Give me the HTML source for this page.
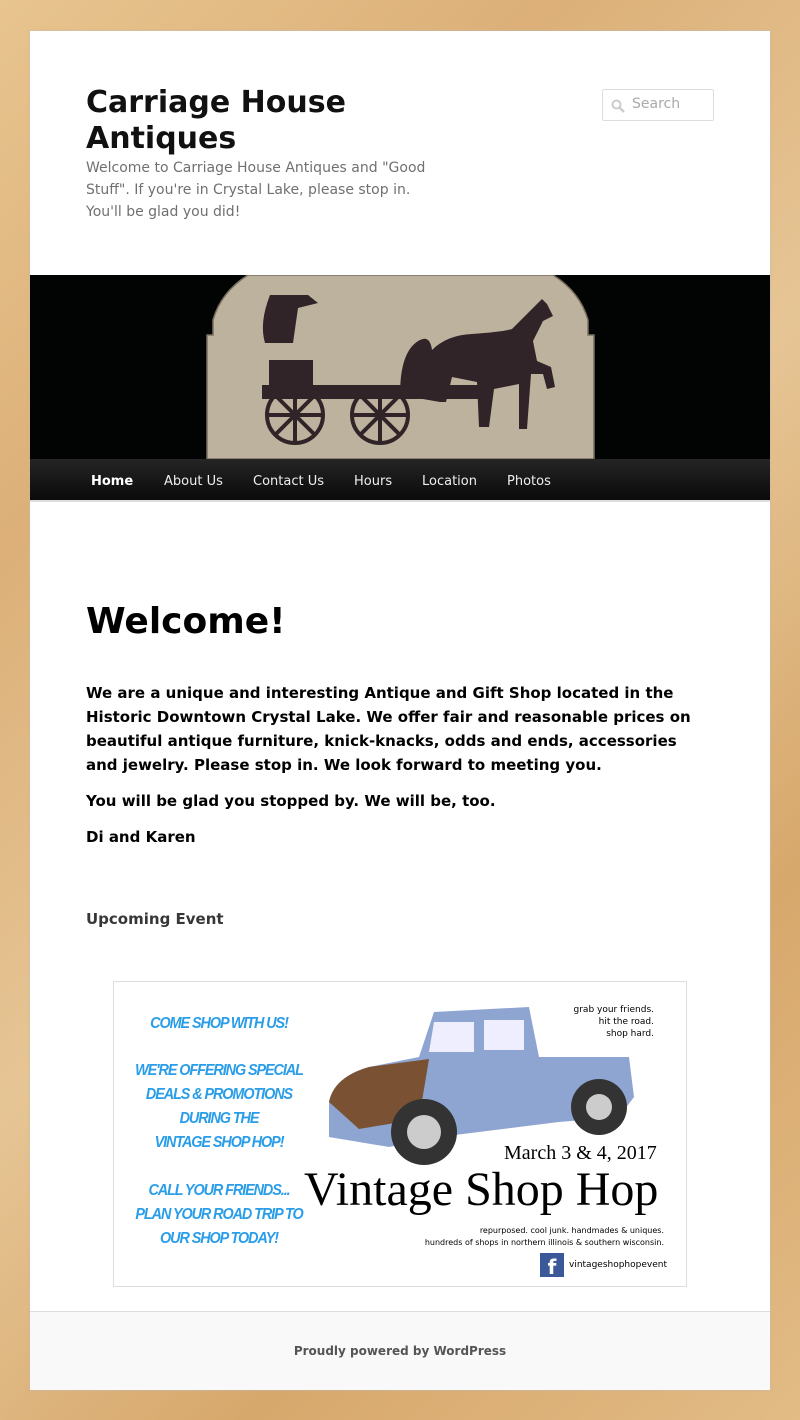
<!DOCTYPE html>
<html><head><meta charset="utf-8"><style>
*{margin:0;padding:0;box-sizing:border-box}
body{width:800px;height:1420px;background:linear-gradient(135deg,#e8c48e 0%,#dcb078 25%,#e6c595 50%,#d7a86c 75%,#e2bb85 100%);font-family:"DejaVu Sans","Liberation Sans",sans-serif;position:relative;overflow:hidden}
#page{position:absolute;left:30px;top:31px;width:740px;height:1359px;background:#fff;box-shadow:0 0 2px #bbb}
.title{position:absolute;left:56px;top:54px;font-size:30px;font-weight:bold;line-height:36px;color:#111}
.desc{position:absolute;left:56px;top:126px;font-size:14px;line-height:22px;color:#707070;width:360px}
.search{position:absolute;left:572px;top:58px;width:112px;height:32px;border:1px solid #ddd;border-radius:2px;font-size:14px;color:#aaa;padding:6px 0 0 29px}
.search svg{position:absolute;left:8px;top:9px}
#hdr{position:absolute;left:0;top:244px;width:740px;height:184px;background:#020303;overflow:hidden}
nav{position:absolute;left:0;top:428px;width:740px;height:43px;background:linear-gradient(#252525,#0a0a0a);border-bottom:2px solid #ddd}
nav span{position:absolute;top:14px;font-size:13px;color:#eee}
h1{position:absolute;left:56px;top:570px;font-size:36px;font-weight:bold;color:#000}
.p{position:absolute;left:56px;font-size:15px;font-weight:bold;line-height:24px;color:#000;width:620px}
.ev{position:absolute;left:56px;top:879px;font-size:15px;font-weight:bold;color:#373737}
#img{position:absolute;left:83px;top:950px;width:574px;height:306px;border:1px solid #ddd;background:#fff;overflow:hidden}
.bl{position:absolute;font-family:"Liberation Sans",sans-serif;font-style:italic;font-weight:bold;color:#2a9de8;font-size:16px;text-align:center;width:200px;line-height:24px;letter-spacing:-1.2px;transform:scaleX(0.9);transform-origin:center}
footer{position:absolute;left:0;top:1280px;width:740px;height:79px;background:#f9f9f9;border-top:1px solid #ddd;text-align:center;font-size:12px;font-weight:bold;color:#555;padding-top:32px}
</style></head><body>
<div id="page">
<div class="title">Carriage House<br>Antiques</div>
<div class="desc">Welcome to Carriage House Antiques and "Good Stuff". If you're in Crystal Lake, please stop in. You'll be glad you did!</div>
<div class="search"><svg width="14" height="14" viewBox="0 0 14 14"><circle cx="5.5" cy="5.5" r="4" fill="none" stroke="#ccc" stroke-width="2"/><path d="M8.5 8.5L13 13" stroke="#ccc" stroke-width="2.5"/></svg>Search</div>
<div id="hdr"><svg width="740" height="184" viewBox="0 0 740 184">
<path d="M177 184V60h6V45q8-28 35-45h305q27 17 35 45v15h6v124z" fill="#bdb29e" stroke="#7a705e" stroke-width="1.5"/>
<g fill="#302428">
<path d="M240 20h38l10 8-20 5 -5 35h-28q-6-20 5-48z"/>
<rect x="239" y="85" width="44" height="32"/>
<path d="M232 110h230v14H232z"/>
<path d="M370 120q0-45 20-55 10-5 12 10 15-15 40-16 30-2 40-5l30-30 5 5 6 12-10 5-10 20 4 20 14 6 4 20-8 2-4-15-12 0 -4 55h-8l0-45-25 5-5 38h-10l-2-45-25-5-6 25h-6z"/>
</g>
<g fill="none" stroke="#302428" stroke-width="4">
<circle cx="265" cy="140" r="28"/><circle cx="350" cy="140" r="28"/>
<path d="M265 112v56M237 140h56M245 120l40 40M285 120l-40 40M350 112v56M322 140h56M330 120l40 40M370 120l-40 40"/>
</g></svg></div>
<nav><span style="left:61px;top:15px;font-weight:bold;color:#fff">Home</span><span style="left:134px;top:15px">About Us</span><span style="left:223px;top:15px">Contact Us</span><span style="left:324px;top:15px">Hours</span><span style="left:392px;top:15px">Location</span><span style="left:477px;top:15px">Photos</span></nav>
<h1>Welcome!</h1>
<div class="p" style="top:650px">We are a unique and interesting Antique and Gift Shop located in the Historic Downtown Crystal Lake. We offer fair and reasonable prices on beautiful antique furniture, knick-knacks, odds and ends, accessories and jewelry. Please stop in. We look forward to meeting you.</div>
<div class="p" style="top:758px">You will be glad you stopped by. We will be, too.</div>
<div class="p" style="top:794px">Di and Karen</div>
<div class="ev">Upcoming Event</div>
<div id="img">
<div class="bl" style="left:5px;top:30px">COME SHOP WITH US!</div>
<div class="bl" style="left:5px;top:77px">WE'RE OFFERING SPECIAL<br>DEALS &amp; PROMOTIONS<br>DURING THE<br>VINTAGE SHOP HOP!</div>
<div class="bl" style="left:5px;top:197px">CALL YOUR FRIENDS...<br>PLAN YOUR ROAD TRIP TO<br>OUR SHOP TODAY!</div>
<svg style="position:absolute;left:185px;top:10px" width="370" height="190" viewBox="0 0 370 190">
<path d="M30 110q5-25 40-35l50-10 15-45 95-5 10 50 90 0 5 40-15 20-60 5-120 15-50 10-60-10z" fill="#8ea5d2"/>
<path d="M30 110q5-25 40-35l60-8-10 60-60 10z" fill="#7a5233"/>
<circle cx="125" cy="140" r="33" fill="#333"/><circle cx="125" cy="140" r="17" fill="#ccc"/>
<circle cx="300" cy="115" r="28" fill="#333"/><circle cx="300" cy="115" r="13" fill="#ccc"/>
<path d="M135 30h40v30h-45zM185 28h40v30h-40z" fill="#eef"/>
</svg>
<div style="position:absolute;right:32px;top:22px;font-size:9px;text-align:right;line-height:12px">grab your friends.<br>hit the road.<br>shop hard.</div>
<div style="position:absolute;left:390px;top:160px;font-family:'Liberation Serif',serif;font-size:20px">March 3 &amp; 4, 2017</div>
<div style="position:absolute;left:190px;top:180px;font-family:'Liberation Serif',serif;font-size:48px;letter-spacing:0px;white-space:nowrap">Vintage Shop Hop</div>
<div style="position:absolute;right:22px;top:243px;font-size:8px;text-align:right;line-height:12px">repurposed. cool junk. handmades &amp; uniques.<br>hundreds of shops in northern illinois &amp; southern wisconsin.</div>
<div style="position:absolute;left:426px;top:271px;width:24px;height:24px;background:#3b5998;color:#fff;font-weight:bold;font-size:20px;text-align:center;line-height:28px">f</div>
<div style="position:absolute;left:455px;top:278px;font-size:9px">vintageshophopevent</div>
</div>
<footer>Proudly powered by WordPress</footer>
</div>
</body></html>
